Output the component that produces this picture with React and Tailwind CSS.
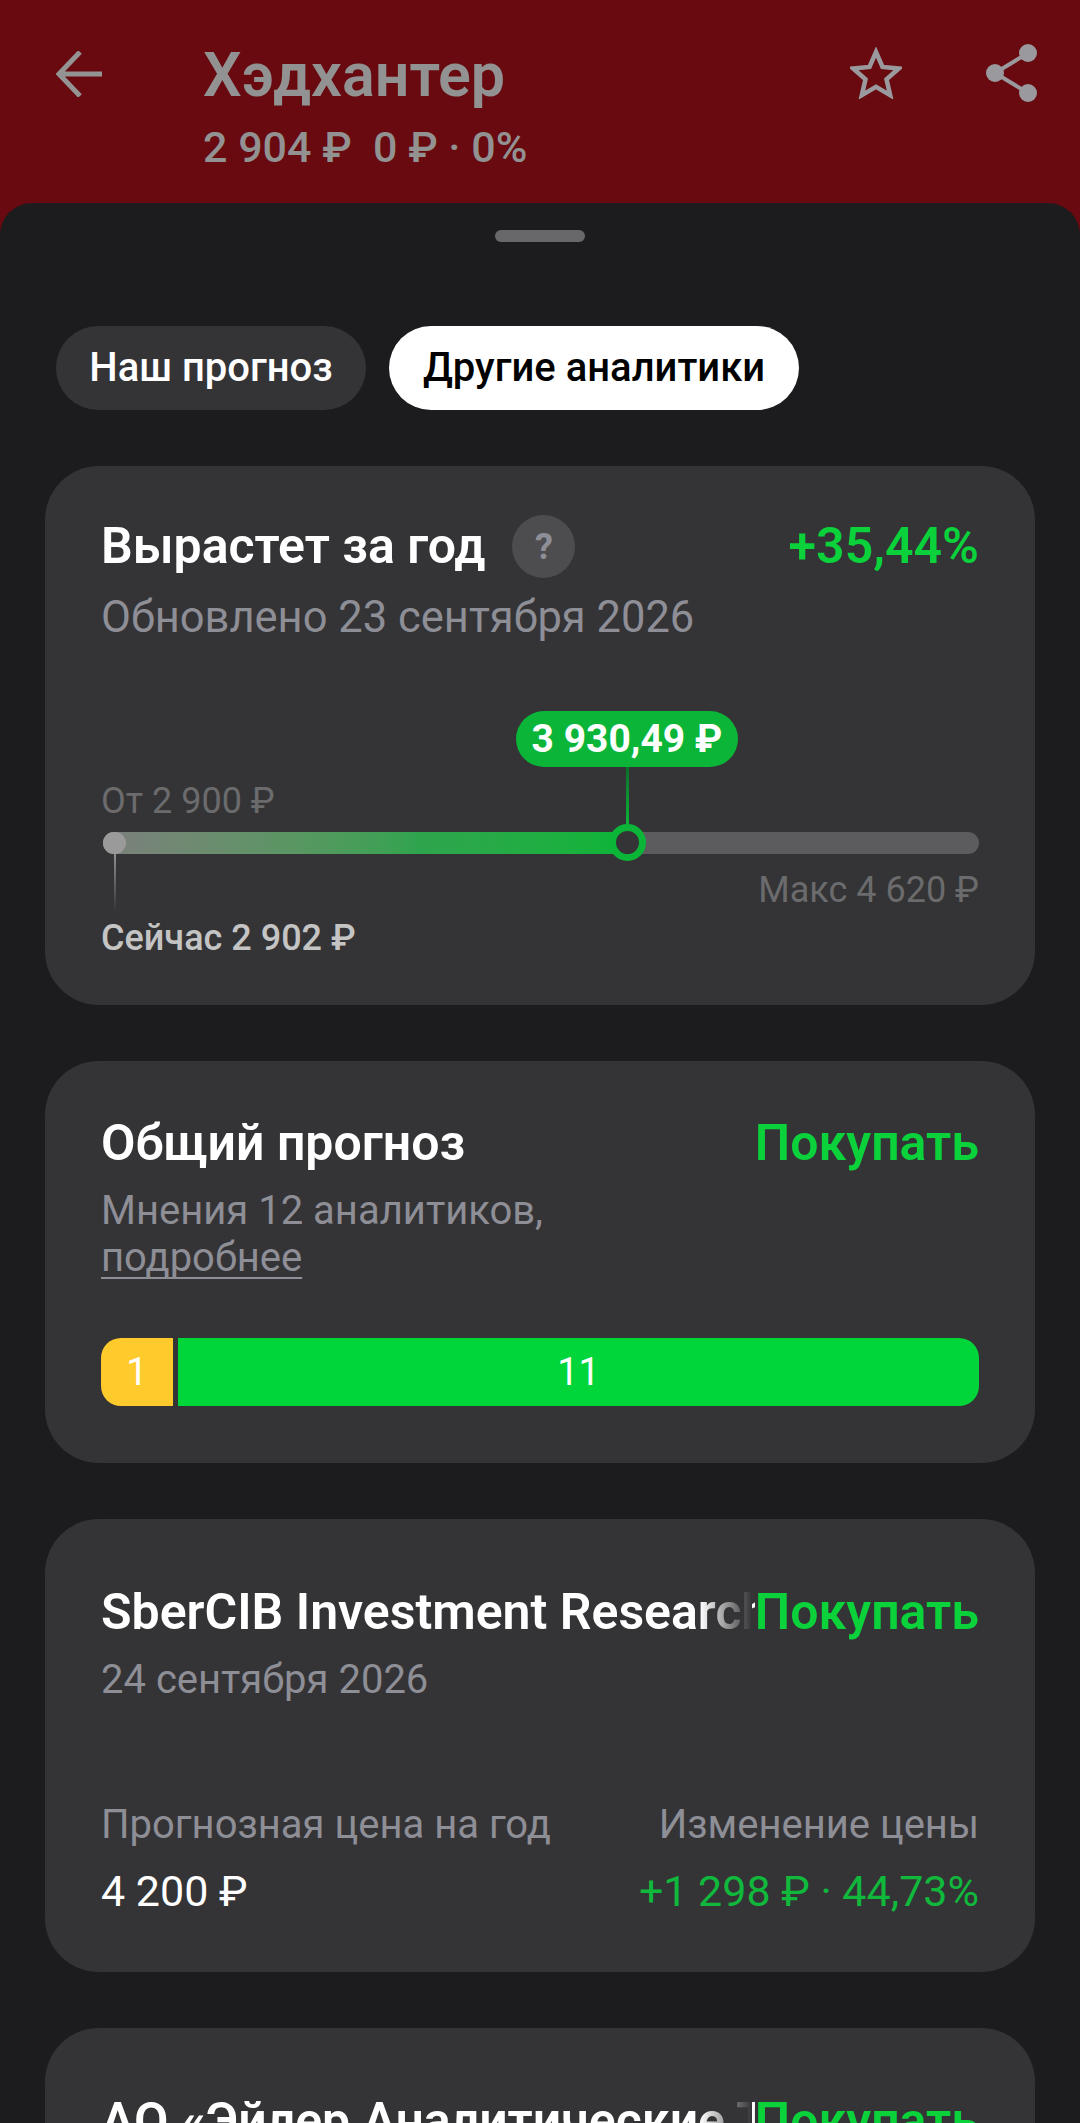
import React from 'react';

const font = { fontFamily: 'Roboto, "Noto Sans", sans-serif' };

const Title = ({ children, fade }) => (
  <div className="relative min-w-0 flex-1 overflow-hidden whitespace-nowrap text-[50px] leading-[60px] font-semibold text-white">
    {children}
    {fade && (
      <div className="absolute right-[3px] top-0 h-full w-[52px] bg-gradient-to-r from-transparent to-[#343436]" />
    )}
  </div>
);

const Verdict = () => (
  <div className="shrink-0 text-[50px] leading-[60px] font-semibold text-[#0bd13b]">Покупать</div>
);

const AnalystCard = ({ name, date, price, change }) => (
  <div className="rounded-[54px] bg-[#343436] px-[56px] pt-[63px] pb-[53px]">
    <div className="flex">
      <Title fade>{name}</Title>
      <Verdict />
    </div>
    <div className="mt-[10px] text-[40px] leading-[56px] text-[#8e8e96]">{date}</div>
    <div className="mt-[89px] flex justify-between text-[40px] leading-[56px] text-[#8e8e96]">
      <span>Прогнозная цена на год</span>
      <span>Изменение цены</span>
    </div>
    <div className="mt-[10px] flex justify-between text-[43px] leading-[56px]">
      <span className="text-white">{price}</span>
      <span className="text-[#10b83c]">{change}</span>
    </div>
  </div>
);

export default function App() {
  return (
    <div style={font} className="h-[2123px] w-[1080px] overflow-hidden bg-[#680a0f]">
      {/* top bar */}
      <div className="flex h-[203px] items-start pl-[56px] pr-[42px] pt-[40px]">
        <svg className="mt-[11px] h-[46px] w-[46px] shrink-0" viewBox="0 0 46 46" fill="none" stroke="#949494" strokeWidth="5">
          <path d="M46 23H4M24 1L3 23l21 22" />
        </svg>
        <div className="ml-[101px] flex-1">
          <div className="text-[61px] leading-[70px] font-semibold text-[#929292]">Хэдхантер</div>
          <div className="mt-[12px] text-[43px] leading-[50px] font-medium text-[#929292]">2 904 ₽&nbsp;&nbsp;0 ₽ · 0%</div>
        </div>
        <svg className="mt-[7px] mr-[84px] h-[52px] w-[52px] shrink-0" viewBox="0 0 52 52" fill="none" stroke="#9a9a9e" strokeWidth="4.500">
          <path d="M26 5l6.500 15 16.300 1.500-12.300 10.800 3.700 15.900L26 39.900l-14.200 8.300 3.700-15.900L3.200 21.500 19.500 20z" />
        </svg>
        <svg className="mt-[4px] h-[58px] w-[52px] shrink-0" viewBox="0 0 52 58" fill="#9a9a9e" stroke="none">
          <circle cx="42" cy="9" r="9" />
          <circle cx="9" cy="29" r="9" />
          <circle cx="42" cy="49" r="9" />
          <path d="M42 9L9 29l33 20" fill="none" stroke="#9a9a9e" strokeWidth="4" />
        </svg>
      </div>

      {/* sheet */}
      <div className="h-[1920px] overflow-hidden rounded-t-[32px] bg-[#1c1c1e]">
        <div className="mx-auto mt-[27px] h-[12px] w-[90px] rounded-full bg-[#68686a]" />

        <div className="mt-[84px] flex gap-[23px] pl-[56px]">
          <div className="flex h-[84px] w-[310px] items-center justify-center rounded-full bg-[#343436] text-[40px] font-medium text-white">
            Наш прогноз
          </div>
          <div className="flex h-[84px] w-[410px] items-center justify-center rounded-full bg-white text-[40px] font-medium text-black">
            Другие аналитики
          </div>
        </div>

        <div className="mt-[56px] flex flex-col gap-[56px] px-[45px]">
          {/* forecast */}
          <div className="rounded-[54px] bg-[#343436] px-[56px] pt-[49px] pb-[47px]">
            <div className="flex items-center">
              <div className="text-[50px] leading-[63px] font-semibold text-white">Вырастет за год</div>
              <div className="ml-[27px] flex h-[63px] w-[63px] items-center justify-center rounded-full bg-[#4d4d50] text-[36px] font-bold text-[#8e8e96]">
                ?
              </div>
              <div className="ml-auto text-[50px] leading-[63px] font-semibold text-[#0bd13b]">+35,44%</div>
            </div>
            <div className="mt-[12px] text-[43.500px] leading-[56px] text-[#8e8e96]">Обновлено 23 сентября 2026</div>

            <div className="mt-[24px] h-[111px]" />
            <div className="text-[36px] leading-[40px] text-[#6b6b6d]">От 2 900 ₽</div>

            <div className="relative ml-[2px] mt-[11px] h-[22px] rounded-full bg-[#5c5c5e]">
              <div className="h-full w-[525px] rounded-l-full bg-gradient-to-r from-[#7c7f7c] via-[#2fa44e] via-60% to-[#0ab537]" />
              {/* current price */}
              <div className="absolute left-0 top-0 h-[22px] w-[23px] rounded-full bg-[#9a9a9a]" />
              <div className="absolute left-[11px] top-[22px] h-[58px] w-[2px] bg-gradient-to-b from-[#909090] to-transparent" />
              {/* target */}
              <div className="absolute left-[506px] top-[-8px] h-[37px] w-[37px] rounded-full border-[7px] border-[#0ab537] bg-[#343436]" />
              <div className="absolute left-[523px] top-[-65px] h-[57px] w-[3px] bg-gradient-to-b from-[#0b6f2a] to-[#0ab537]" />
              <div className="absolute left-[413px] top-[-121px] flex h-[56px] w-[222px] items-center justify-center rounded-full bg-[#0ab537] text-[39px] font-bold text-white">
                3 930,49 ₽
              </div>
            </div>

            <div className="mt-[16px] text-right text-[36px] leading-[40px] text-[#6b6b6d]">Макс 4 620 ₽</div>
            <div className="mt-[8px] text-[36px] leading-[40px] font-medium text-[#c4c4c4]">Сейчас 2 902 ₽</div>
          </div>

          {/* summary */}
          <div className="rounded-[54px] bg-[#343436] px-[56px] pt-[52px] pb-[57px]">
            <div className="flex">
              <Title>Общий прогноз</Title>
              <Verdict />
            </div>
            <div className="mt-[14px] text-[40px] leading-[47px] text-[#8e8e96]">Мнения 12 аналитиков,</div>
            <div className="text-[40px] leading-[47px] text-[#8e8e96] underline decoration-2 underline-offset-[6px] [text-decoration-skip-ink:none]">подробнее</div>
            <div className="mt-[57px] flex h-[68px] gap-[5px] text-[38px] text-white">
              <div className="flex w-[72px] items-center justify-center rounded-l-[20px] bg-[#ffca2c]">1</div>
              <div className="flex flex-1 items-center justify-center rounded-r-[20px] bg-[#00d639]">11</div>
            </div>
          </div>

          <AnalystCard name="SberCIB Investment Research" date="24 сентября 2026" price="4 200 ₽" change="+1 298 ₽ · 44,73%" />
          <AnalystCard name="АО «Эйлер Аналитические Технологии»" date="24 сентября 2026" price="4 200 ₽" change="+1 298 ₽ · 44,73%" />
        </div>
      </div>
    </div>
  );
}
